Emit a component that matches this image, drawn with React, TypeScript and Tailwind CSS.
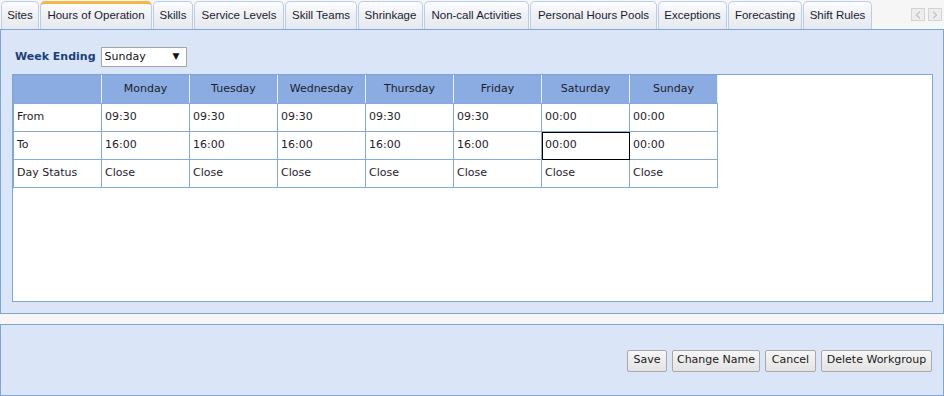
import { ChevronLeft, ChevronRight } from 'lucide-react';

const tabs = [
  { label: 'Sites', w: 'w-[38px]' },
  { label: 'Hours of Operation', w: 'w-[112px]', active: true },
  { label: 'Skills', w: 'w-[40px]' },
  { label: 'Service Levels', w: 'w-[90px]' },
  { label: 'Skill Teams', w: 'w-[72px]' },
  { label: 'Shrinkage', w: 'w-[65px]' },
  { label: 'Non-call Activities', w: 'w-[105px]' },
  { label: 'Personal Hours Pools', w: 'w-[127px]' },
  { label: 'Exceptions', w: 'w-[69px]' },
  { label: 'Forecasting', w: 'w-[74px]' },
  { label: 'Shift Rules', w: 'w-[69px]' },
];

const days = ['Monday', 'Tuesday', 'Wednesday', 'Thursday', 'Friday', 'Saturday', 'Sunday'];
const from = ['09:30', '09:30', '09:30', '09:30', '09:30', '00:00', '00:00'];
const to = ['16:00', '16:00', '16:00', '16:00', '16:00', '00:00', '00:00'];

const cell = 'w-[88px] h-[28px] border border-[#84aadb] px-[3px] text-left align-middle';
const head = 'w-[88px] h-[28px] border border-[#84aadb] border-r-[#eef3fb] text-center align-middle font-normal';

function Tab({ label, w, active }: { label: string; w: string; active?: boolean }) {
  return (
    <div
      className={`${w} shrink-0 h-[28px] flex items-center justify-center whitespace-nowrap overflow-hidden rounded-t-[5px] border border-b-0 border-[#b9cde9] bg-gradient-to-b from-[#fdfdfe] via-[#eef0f4] to-[#e6e9ef] text-[11.5px] text-[#1b1b2e] ${
        active ? 'border-t-[3px] border-t-[#f3b648]' : ''
      }`}
    >
      <span className={active ? '-mt-[2px]' : ''}>{label}</span>
    </div>
  );
}

function ActionButton({ label, w }: { label: string; w: string }) {
  return (
    <button
      className={`${w} h-[22px] rounded-[2px] border border-[#a9a9a9] bg-gradient-to-b from-[#f6f6f6] to-[#e3e3e3] text-[11px] text-[#1a1a1a] whitespace-nowrap`}
    >
      {label}
    </button>
  );
}

export default function App() {
  return (
    <div className="w-[944px] h-[396px] bg-[#f6f6f6] overflow-hidden" style={{ fontFamily: '"DejaVu Sans", sans-serif' }}>
      {/* tab strip */}
      <div className="h-[29px] flex items-start">
        <div className="flex gap-[1px] ml-[1px] mt-[1px]" style={{ fontFamily: '"Liberation Sans", Arial, sans-serif' }}>
          {tabs.map((t) => (
            <Tab key={t.label} {...t} />
          ))}
        </div>
        <div className="ml-auto mr-[2px] mt-[8px] flex gap-[3px]">
          <div className="w-[14px] h-[13px] border border-[#d4d4d4] bg-[#ededed] flex items-center justify-center">
            <ChevronLeft className="w-[12px] h-[12px] text-[#c4c4c4]" strokeWidth={2.5} />
          </div>
          <div className="w-[14px] h-[13px] border border-[#d4d4d4] bg-[#ededed] flex items-center justify-center">
            <ChevronRight className="w-[12px] h-[12px] text-[#c4c4c4]" strokeWidth={2.5} />
          </div>
        </div>
      </div>

      {/* main panel */}
      <div className="h-[285px] border border-[#7fa6d8] bg-[#dae5f8] pl-[11px] pr-[10px] pt-[17px] pb-[11px] flex flex-col">
        <div className="flex items-center h-[20px] mb-[7px]">
          <span className="ml-[3px] text-[11px] font-bold text-[#1d3f78]">Week Ending</span>
          <div className="ml-[5px] w-[86px] h-[20px] bg-white border border-[#a5a5a5] flex items-center justify-between pl-[3px] pr-[6px] text-[11px] text-[#111]">
            <span>Sunday</span>
            <span className="text-[9px]">▼</span>
          </div>
        </div>
        <div className="flex-1 bg-white border border-[#7fa6d8]">
          <table className="border-collapse table-fixed text-[11px] text-[#1e1e2a]">
            <thead>
              <tr className="bg-[#8aace3]">
                <th className={head}></th>
                {days.map((d, i) => (
                  <th key={d} className={i === 6 ? `${head} border-r-[#84aadb]` : head}>
                    {d}
                  </th>
                ))}
              </tr>
            </thead>
            <tbody>
              <tr>
                <td className={cell}>From</td>
                {from.map((v, i) => (
                  <td key={i} className={cell}>{v}</td>
                ))}
              </tr>
              <tr>
                <td className={cell}>To</td>
                {to.map((v, i) => (
                  <td key={i} className={i === 5 ? `${cell} outline outline-1 outline-black -outline-offset-1` : cell}>
                    {v}
                  </td>
                ))}
              </tr>
              <tr>
                <td className={cell}>Day Status</td>
                {days.map((d) => (
                  <td key={d} className={cell}>Close</td>
                ))}
              </tr>
            </tbody>
          </table>
        </div>
      </div>

      {/* bottom action panel */}
      <div className="mt-[10px] h-[72px] border border-[#7fa6d8] bg-[#dae5f8] flex items-center justify-end gap-[5px] pr-[11px] pt-[1px]">
        <ActionButton label="Save" w="w-[40px]" />
        <ActionButton label="Change Name" w="w-[88px]" />
        <ActionButton label="Cancel" w="w-[51px]" />
        <ActionButton label="Delete Workgroup" w="w-[111px]" />
      </div>
    </div>
  );
}
